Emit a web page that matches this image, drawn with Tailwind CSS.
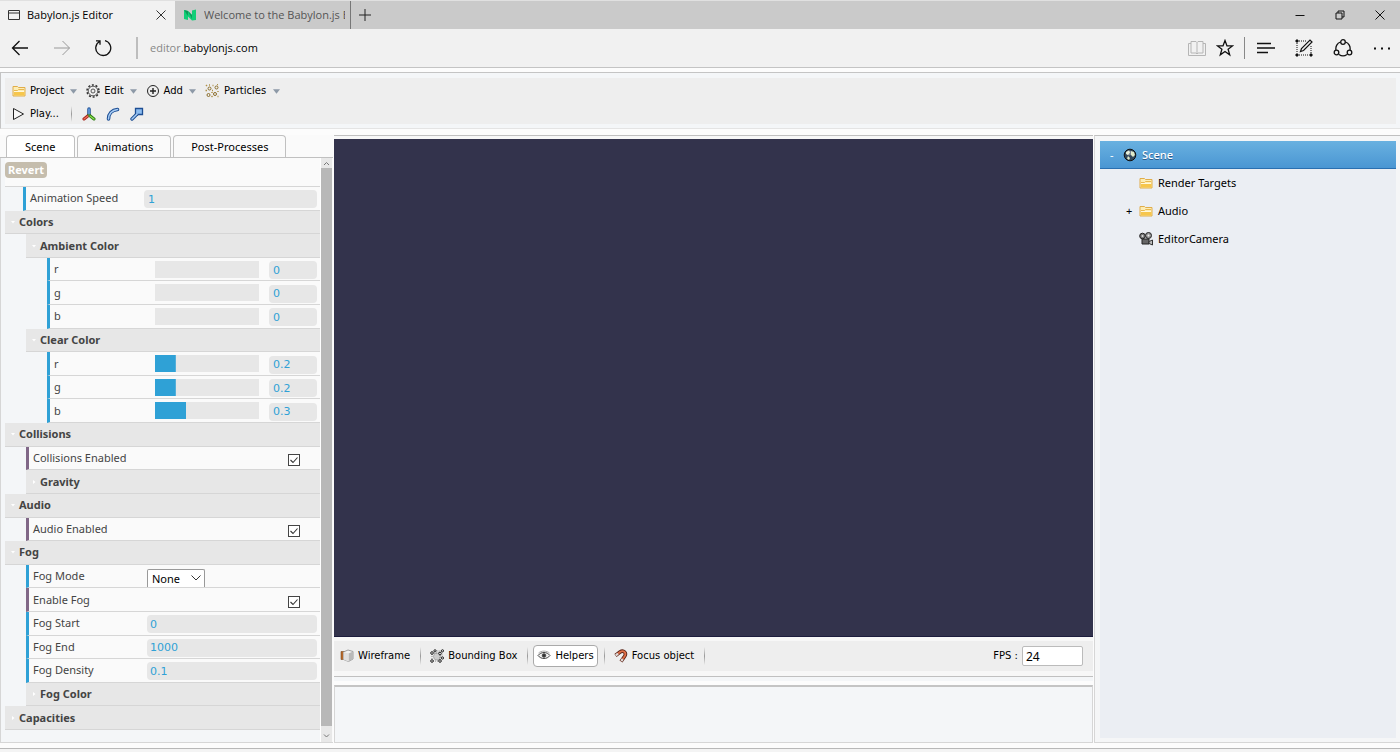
<!DOCTYPE html>
<html lang="en">

<head>
    <meta charset="UTF-8">
    <meta name="viewport" content="width=device-width, initial-scale=1.0">
    <title>Babylon.js Editor</title>
    <script src="https://cdn.jsdelivr.net/npm/@tailwindcss/browser@4"></script>
</head>

<body class="h-screen flex flex-col overflow-hidden bg-[#fcfcfc] font-['Noto_Sans',sans-serif] text-[11px] leading-4 text-black">
    <!-- shared icons -->
    <svg class="hidden">
        <symbol id="folder" viewBox="0 0 14 14">
            <path d="M1 2.500h4.500l1 1H13V12H1z" fill="#fdedb4" stroke="#e0ad4a" />
            <path d="M2 8h10.500v3.500H2z" fill="#f6c64c" />
            <path d="M2 6.500h3.500l1-1H12" fill="none" stroke="#e8b850" />
            <path d="M2 7.500h10" stroke="#fff8dc" />
        </symbol>
        <symbol id="caret" viewBox="0 0 8 5">
            <path d="M0 0h8L4 5z" fill="#8d99a7" />
        </symbol>
        <symbol id="check" viewBox="0 0 12 12">
            <path d="M2.500 6l2.500 2.500 4.500-5" fill="none" stroke="#333" stroke-width="1.100" />
        </symbol>
        <symbol id="open" viewBox="0 0 4 4">
            <path d="M0 1h4L2 3.500z" fill="#fff" />
        </symbol>
        <symbol id="closed" viewBox="0 0 4 4">
            <path d="M1 0v4l2.500-2z" fill="#fff" />
        </symbol>
    </svg>

    <!-- browser tabs -->
    <div class="flex h-[29px] shrink-0 bg-[#cacaca] border-t border-[#e0e0e0] font-['Open_Sans',sans-serif]">
        <div class="flex items-center w-[175px] bg-[#f1f1f1] pl-2 pr-2">
            <svg class="w-3 h-3" viewBox="0 0 12 12" fill="none" stroke="#333"><path d="M.5 1.500h11v9H.5zM.5 4h11" /></svg>
            <span class="ml-[7px] flex-1 whitespace-nowrap">Babylon.js Editor</span>
            <button aria-label="Close tab"><svg class="w-3 h-3" viewBox="0 0 12 12" stroke="#333"><path d="M1.500 1.500l9 9M10.500 1.500l-9 9" /></svg></button>
        </div>
        <div class="flex items-center w-[176px] border-r border-[#777] pl-2 pr-[5px] text-[#555]">
            <svg class="w-3.5 h-3" viewBox="0 0 14 12"><path d="M1 1l4 1 4 4V1.500l4-1V11l-4 .5-4-4V11l-4-1z" fill="#12ce77" /><path d="M5 2l4 8V6zM1 1l4 1v5z" fill="#0b9c58" /></svg>
            <span class="ml-[7px] flex-1 overflow-hidden whitespace-nowrap">Welcome to the Babylon.js Editor</span>
        </div>
        <button aria-label="New tab" class="ml-2"><svg class="w-3 h-3" viewBox="0 0 12 12" stroke="#222"><path d="M6 0v12M0 6h12" /></svg></button>
        <div class="ml-auto flex items-center gap-7 pr-3.5">
            <button aria-label="Minimize"><svg class="w-3 h-3" viewBox="0 0 12 12" stroke="#111"><path d="M1.500 6.500h9" /></svg></button>
            <button aria-label="Restore"><svg class="w-3 h-3" viewBox="0 0 12 12" fill="none" stroke="#111"><path d="M2 4h6v6H2zM4 4V2h6v6H8" /></svg></button>
            <button aria-label="Close"><svg class="w-3 h-3" viewBox="0 0 12 12" stroke="#111"><path d="M1.500 1.500l9 9M10.500 1.500l-9 9" /></svg></button>
        </div>
    </div>

    <!-- address bar -->
    <div class="flex items-center h-[39px] shrink-0 bg-[#f1f1f1] border-b border-[#c4c4c4] pl-[11px] pr-[9px] font-['Open_Sans',sans-serif]">
        <button aria-label="Back"><svg class="w-[18px] h-4" viewBox="0 0 18 16" fill="none" stroke="#111" stroke-width="1.300"><path d="M17 8H1.500M8.500 1L1.500 8l7 7" /></svg></button>
        <button aria-label="Forward" class="ml-6"><svg class="w-[18px] h-4" viewBox="0 0 18 16" fill="none" stroke="#999"><path d="M1 8h15.500M9.500 1l7 7-7 7" /></svg></button>
        <button aria-label="Refresh" class="ml-[23px]"><svg class="w-[18px] h-[18px]" viewBox="0 0 18 18" fill="none" stroke="#111" stroke-width="1.300"><path d="M5.500 2.500a7.500 7.500 0 1 0 5.500-.8M2 1.800h4v4" /></svg></button>
        <div class="ml-6 w-0.5 h-[22px] bg-[#bdbdbd]"></div>
        <div class="ml-3 flex-1 text-[#888]">editor.<span class="text-black">babylonjs.com</span></div>
        <button aria-label="Reading view"><svg class="w-[18px] h-4" viewBox="0 0 18 16" fill="none" stroke="#b5b5b5"><path d="M3 1.500h5l1 1 1-1h5V13h-5l-1 1-1-1H3zM9 2.500V14M3 3.500H.5v12h17v-12H15" /></svg></button>
        <button aria-label="Favorite" class="ml-2.5"><svg class="w-[18px] h-[18px]" viewBox="0 0 18 18" fill="none" stroke="#111" stroke-width="1.300"><path d="M9 1.500l2 5.400h5.500l-4.400 3.400 1.600 5.500L9 12.500l-4.700 3.300 1.600-5.500L1.500 6.900H7z" /></svg></button>
        <div class="ml-2.5 w-px h-[22px] bg-[#888]"></div>
        <button aria-label="Hub" class="ml-3"><svg class="w-[18px] h-4" viewBox="0 0 18 16" fill="none" stroke="#111" stroke-width="1.300"><path d="M0 3.500h14M0 8h18M0 12.500h11" /></svg></button>
        <button aria-label="Web note" class="ml-5"><svg class="w-[18px] h-[18px]" viewBox="0 0 18 18" fill="none" stroke="#111"><path d="M2 4v10M4 2h7M4 16h10M16 7v7" stroke-dasharray="1 1" /><path d="M1 1h2v2H1zM1 15h2v2H1zM15 15h2v2h-2z" fill="#111" /><path d="M5.500 12.500l1-3 8.500-8.500 2 2-8.500 8.500z" stroke-width="1.200" /></svg></button>
        <button aria-label="Share" class="ml-5"><svg class="w-5 h-[18px]" viewBox="0 0 20 18" fill="none" stroke="#111" stroke-width="1.300"><path d="M7.500 3A7 7 0 0 0 3 11M12.500 3A7 7 0 0 1 17 11M6 15.500a7 7 0 0 0 8 0" /><circle cx="10" cy="3" r="2.300" /><circle cx="3.500" cy="13.500" r="2.300" /><circle cx="16.500" cy="13.500" r="2.300" /></svg></button>
        <button aria-label="More" class="ml-5"><svg class="w-[18px] h-4" viewBox="0 0 18 16" fill="#111"><path d="M1 7.500h2v2H1zM8 7.500h2v2H8zM15 7.500h2v2h-2z" /></svg></button>
    </div>

    <!-- editor toolbar -->
    <div class="mt-1 shrink-0 bg-[#f4f6f8] border border-r-0 border-[#c4c4c4] border-b-[#e4e4e4] px-1 pt-[5px] pb-1">
        <div class="pt-px bg-[#eee] font-['DejaVu_Sans',sans-serif] text-[10px]">
            <div class="flex items-center gap-px h-6 pl-[3px]">
                <button class="flex items-center px-1 gap-1">
                    <svg class="w-3.5 h-3.5"><use href="#folder" /></svg>Project<svg class="ml-0.5 w-[7px] h-[5px]"><use href="#caret" /></svg>
                </button>
                <button class="flex items-center px-1 gap-1">
                    <svg class="w-3.5 h-3.5" viewBox="0 0 14 14" fill="none" stroke="#333"><circle cx="7" cy="7" r="6" stroke-width="1.500" stroke-dasharray="2 1.770" /><circle cx="7" cy="7" r="4.800" stroke-width=".8" /><circle cx="7" cy="7" r="2" stroke-width=".8" /></svg>Edit<svg class="ml-0.5 w-[7px] h-[5px]"><use href="#caret" /></svg>
                </button>
                <button class="flex items-center px-1 gap-1">
                    <svg class="w-3.5 h-3.5" viewBox="0 0 14 14" fill="none" stroke="#222"><circle cx="7" cy="7" r="5.500" /><path d="M7 4v6M4 7h6" stroke-width="1.400" /></svg>Add<svg class="ml-0.5 w-[7px] h-[5px]"><use href="#caret" /></svg>
                </button>
                <button class="flex items-center px-1 gap-[5px]">
                    <svg class="w-3.5 h-3.5" viewBox="0 0 14 14" fill="none" stroke="#8a6d2b"><circle cx="4.500" cy="4.500" r="1.500" /><circle cx="11.500" cy="3.500" r="1.500" /><circle cx="3.500" cy="11" r="1.500" /><circle cx="10" cy="10" r="1.500" /><path d="M1 1l1 1M4 1h1M7.500 1.500h1M.5 6.500h1.500M7 6.500h1M13 7v1M6.500 12l1 1M12.500 12.500h1M7 9V8M12 .5h1" stroke="#b0914a" stroke-width="1.500" /></svg>Particles<svg class="ml-0.5 w-[7px] h-[5px]"><use href="#caret" /></svg>
                </button>
            </div>
            <div class="flex items-center h-[21px] pl-[3px]">
                <button class="flex items-center px-1 gap-1">
                    <svg class="w-3.5 h-3.5" viewBox="0 0 14 14" fill="#f8f8f8" stroke="#222"><path d="M1.500 1.500v11L11.500 7z" /></svg>Play...
                </button>
                <div class="ml-2 mr-[5px] w-px h-4 bg-linear-to-b from-transparent via-[#999] to-transparent"></div>
                <button aria-label="Move" class="px-[5px]"><svg class="w-3.5 h-3.5" viewBox="0 0 14 14" stroke-linecap="round"><path d="M7 2v6" stroke="#1d4e94" stroke-width="3.500" /><path d="M7 8l-5 4" stroke="#a3221c" stroke-width="3" /><path d="M7 8l5 4" stroke="#2c7a16" stroke-width="3" /><path d="M7 2v5" stroke="#6da7e8" stroke-width="1.500" /><path d="M6 9l-4 3" stroke="#f07058" stroke-width="1.300" /><path d="M8 9l4 3" stroke="#8be04c" stroke-width="1.300" /></svg></button>
                <button aria-label="Rotate" class="px-[5px]"><svg class="w-3.5 h-3.5" viewBox="0 0 14 14" fill="none" stroke-linecap="round"><path d="M2.500 12C2.500 7 6 3 11.500 2.500" stroke="#1d4e94" stroke-width="3.600" /><path d="M2.500 12C2.500 7 6 3 11.500 2.500" stroke="#a8cdf5" stroke-width="1.600" /></svg></button>
                <button aria-label="Scale" class="px-[5px]"><svg class="w-3.5 h-3.5" viewBox="0 0 14 14" stroke-linecap="round"><path d="M2 12l5-5" stroke="#1d4e94" stroke-width="3.400" /><path d="M5.500 1.500h7v6h-7z" fill="#8dbdf0" stroke="#1d4e94" stroke-width="1.300" /><path d="M2 12l5-5" stroke="#a8cdf5" stroke-width="1.400" /></svg></button>
            </div>
        </div>
    </div>

    <!-- workspace -->
    <div class="mt-1.5 mb-[5px] flex flex-1 min-h-0">

        <!-- left panel -->
        <div class="flex flex-col w-[333px] shrink-0 bg-[#fafafa] border-b border-[#d6d6d6]">
            <div class="flex gap-0.5 pl-1.5 border-b border-[#c0c0c0] shrink-0">
                <button class="h-[22px] -mb-px px-[18px] bg-white border border-b-0 border-[#c0c0c0] rounded-t-sm">Scene</button>
                <button class="h-[22px] px-[17px] border border-b-0 border-[#c0c0c0] rounded-t-sm">Animations</button>
                <button class="h-[22px] px-[17px] border border-b-0 border-[#c0c0c0] rounded-t-sm">Post-Processes</button>
            </div>
            <div class="flex flex-1 min-h-0 border-l border-[#d6d6d6]">
                <div class="flex-1 min-w-0 flex flex-col pl-1 bg-[#f4f6f8] text-[#444]">
                    <div class="h-[29px] shrink-0 pt-1 bg-[#fafafa] border-b border-[#d6d6d6]">
                        <button class="block h-4 px-[3px] rounded-sm bg-[#c5bdad] font-bold text-white leading-4">Revert</button>
                    </div>
                    <div class="flex-1 grid grid-cols-1 auto-rows-fr mb-3">
                        <div class="flex items-center ml-[18px] pl-1 pr-[3px] bg-[#fafafa] border-b border-[#d6d6d6] border-l-3 border-l-[#2fa1d6]">
                            <label for="speed" class="w-[114px]">Animation Speed</label>
                            <input id="speed" value="1" class="mt-0.5 flex-1 min-w-0 h-[18px] px-1 rounded-sm bg-[#e7e7e7] text-[#2fa1d6] font-['DejaVu_Sans',sans-serif]">
                        </div>
                        <div class="flex items-center gap-1 pl-[6px] bg-[#e7e7e7] border-b border-[#d6d6d6] font-bold"><svg class="w-1 h-1"><use href="#open" /></svg>Colors</div>
                        <div class="flex items-center gap-1 ml-[21px] pl-[6px] bg-[#e7e7e7] border-b border-[#d6d6d6] font-bold"><svg class="w-1 h-1"><use href="#open" /></svg>Ambient Color</div>
                        <div class="flex items-center ml-[42px] pl-1 pr-[3px] bg-[#fafafa] border-b border-[#d6d6d6] border-l-3 border-l-[#2fa1d6]">
                            <label for="ar" class="w-[101px]">r</label>
                            <input type="range" aria-label="r" min="0" max="1" step="0.1" value="0" style="background-size: 0% 100%" class="appearance-none w-[104px] h-[17px] bg-[#e7e7e7] bg-[linear-gradient(#2fa1d6,#2fa1d6)] bg-no-repeat [&::-webkit-slider-thumb]:appearance-none">
                            <input id="ar" value="0" class="mt-0.5 ml-2.5 flex-1 min-w-0 h-[18px] px-1 rounded-sm bg-[#e7e7e7] text-[#2fa1d6] font-['DejaVu_Sans',sans-serif]">
                        </div>
                        <div class="flex items-center ml-[42px] pl-1 pr-[3px] bg-[#fafafa] border-b border-[#d6d6d6] border-l-3 border-l-[#2fa1d6]">
                            <label for="ag" class="w-[101px]">g</label>
                            <input type="range" aria-label="g" min="0" max="1" step="0.1" value="0" style="background-size: 0% 100%" class="appearance-none w-[104px] h-[17px] bg-[#e7e7e7] bg-[linear-gradient(#2fa1d6,#2fa1d6)] bg-no-repeat [&::-webkit-slider-thumb]:appearance-none">
                            <input id="ag" value="0" class="mt-0.5 ml-2.5 flex-1 min-w-0 h-[18px] px-1 rounded-sm bg-[#e7e7e7] text-[#2fa1d6] font-['DejaVu_Sans',sans-serif]">
                        </div>
                        <div class="flex items-center ml-[42px] pl-1 pr-[3px] bg-[#fafafa] border-b border-[#d6d6d6] border-l-3 border-l-[#2fa1d6]">
                            <label for="ab" class="w-[101px]">b</label>
                            <input type="range" aria-label="b" min="0" max="1" step="0.1" value="0" style="background-size: 0% 100%" class="appearance-none w-[104px] h-[17px] bg-[#e7e7e7] bg-[linear-gradient(#2fa1d6,#2fa1d6)] bg-no-repeat [&::-webkit-slider-thumb]:appearance-none">
                            <input id="ab" value="0" class="mt-0.5 ml-2.5 flex-1 min-w-0 h-[18px] px-1 rounded-sm bg-[#e7e7e7] text-[#2fa1d6] font-['DejaVu_Sans',sans-serif]">
                        </div>
                        <div class="flex items-center gap-1 ml-[21px] pl-[6px] bg-[#e7e7e7] border-b border-[#d6d6d6] font-bold"><svg class="w-1 h-1"><use href="#open" /></svg>Clear Color</div>
                        <div class="flex items-center ml-[42px] pl-1 pr-[3px] bg-[#fafafa] border-b border-[#d6d6d6] border-l-3 border-l-[#2fa1d6]">
                            <label for="cr" class="w-[101px]">r</label>
                            <input type="range" aria-label="r" min="0" max="1" step="0.1" value="0.2" style="background-size: 20% 100%" class="appearance-none w-[104px] h-[17px] bg-[#e7e7e7] bg-[linear-gradient(#2fa1d6,#2fa1d6)] bg-no-repeat [&::-webkit-slider-thumb]:appearance-none">
                            <input id="cr" value="0.2" class="mt-0.5 ml-2.5 flex-1 min-w-0 h-[18px] px-1 rounded-sm bg-[#e7e7e7] text-[#2fa1d6] font-['DejaVu_Sans',sans-serif]">
                        </div>
                        <div class="flex items-center ml-[42px] pl-1 pr-[3px] bg-[#fafafa] border-b border-[#d6d6d6] border-l-3 border-l-[#2fa1d6]">
                            <label for="cg" class="w-[101px]">g</label>
                            <input type="range" aria-label="g" min="0" max="1" step="0.1" value="0.2" style="background-size: 20% 100%" class="appearance-none w-[104px] h-[17px] bg-[#e7e7e7] bg-[linear-gradient(#2fa1d6,#2fa1d6)] bg-no-repeat [&::-webkit-slider-thumb]:appearance-none">
                            <input id="cg" value="0.2" class="mt-0.5 ml-2.5 flex-1 min-w-0 h-[18px] px-1 rounded-sm bg-[#e7e7e7] text-[#2fa1d6] font-['DejaVu_Sans',sans-serif]">
                        </div>
                        <div class="flex items-center ml-[42px] pl-1 pr-[3px] bg-[#fafafa] border-b border-[#d6d6d6] border-l-3 border-l-[#2fa1d6]">
                            <label for="cb" class="w-[101px]">b</label>
                            <input type="range" aria-label="b" min="0" max="1" step="0.1" value="0.3" style="background-size: 30% 100%" class="appearance-none w-[104px] h-[17px] bg-[#e7e7e7] bg-[linear-gradient(#2fa1d6,#2fa1d6)] bg-no-repeat [&::-webkit-slider-thumb]:appearance-none">
                            <input id="cb" value="0.3" class="mt-0.5 ml-2.5 flex-1 min-w-0 h-[18px] px-1 rounded-sm bg-[#e7e7e7] text-[#2fa1d6] font-['DejaVu_Sans',sans-serif]">
                        </div>
                        <div class="flex items-center gap-1 pl-[6px] bg-[#e7e7e7] border-b border-[#d6d6d6] font-bold"><svg class="w-1 h-1"><use href="#open" /></svg>Collisions</div>
                        <div class="flex items-center justify-between ml-[21px] pl-1 pr-5 bg-[#fafafa] border-b border-[#d6d6d6] border-l-3 border-l-[#806787]">
                            <label for="collisions">Collisions Enabled</label>
                            <span class="grid mt-1"><input id="collisions" type="checkbox" checked class="appearance-none col-start-1 row-start-1 w-3 h-3 border border-[#444] bg-white"><svg class="col-start-1 row-start-1 w-3 h-3 pointer-events-none"><use href="#check" /></svg></span>
                        </div>
                        <div class="flex items-center gap-1 ml-[21px] pl-[6px] bg-[#e7e7e7] border-b border-[#d6d6d6] font-bold"><svg class="w-1 h-1"><use href="#closed" /></svg>Gravity</div>
                        <div class="flex items-center gap-1 pl-[6px] bg-[#e7e7e7] border-b border-[#d6d6d6] font-bold"><svg class="w-1 h-1"><use href="#open" /></svg>Audio</div>
                        <div class="flex items-center justify-between ml-[21px] pl-1 pr-5 bg-[#fafafa] border-b border-[#d6d6d6] border-l-3 border-l-[#806787]">
                            <label for="audio">Audio Enabled</label>
                            <span class="grid mt-1"><input id="audio" type="checkbox" checked class="appearance-none col-start-1 row-start-1 w-3 h-3 border border-[#444] bg-white"><svg class="col-start-1 row-start-1 w-3 h-3 pointer-events-none"><use href="#check" /></svg></span>
                        </div>
                        <div class="flex items-center gap-1 pl-[6px] bg-[#e7e7e7] border-b border-[#d6d6d6] font-bold"><svg class="w-1 h-1"><use href="#open" /></svg>Fog</div>
                        <div class="flex items-center ml-[21px] pl-1 bg-[#fafafa] border-b border-[#d6d6d6] border-l-3 border-l-[#2fa1d6]">
                            <label for="fogmode" class="w-[114px]">Fog Mode</label>
                            <span class="grid items-center self-end">
                                <select id="fogmode" class="appearance-none col-start-1 row-start-1 w-[58px] h-[18px] pl-1 border border-b-0 border-[#999] rounded-t-xs bg-white text-black">
                                    <option>None</option>
                                    <option>Linear</option>
                                    <option>Exp</option>
                                </select>
                                <svg class="col-start-1 row-start-1 justify-self-end mr-1 w-2.5 h-1.5 pointer-events-none" viewBox="0 0 10 6" fill="none" stroke="#333"><path d="M.5.5L5 5 9.500.5" /></svg>
                            </span>
                        </div>
                        <div class="flex items-center justify-between ml-[21px] pl-1 pr-5 bg-[#fafafa] border-b border-[#d6d6d6] border-l-3 border-l-[#806787]">
                            <label for="fog">Enable Fog</label>
                            <span class="grid mt-1"><input id="fog" type="checkbox" checked class="appearance-none col-start-1 row-start-1 w-3 h-3 border border-[#444] bg-white"><svg class="col-start-1 row-start-1 w-3 h-3 pointer-events-none"><use href="#check" /></svg></span>
                        </div>
                        <div class="flex items-center ml-[21px] pl-1 pr-[3px] bg-[#fafafa] border-b border-[#d6d6d6] border-l-3 border-l-[#2fa1d6]">
                            <label for="fogstart" class="w-[114px]">Fog Start</label>
                            <input id="fogstart" value="0" class="mt-0.5 flex-1 min-w-0 h-[18px] px-[3px] rounded-sm bg-[#e7e7e7] text-[#2fa1d6] font-['DejaVu_Sans',sans-serif]">
                        </div>
                        <div class="flex items-center ml-[21px] pl-1 pr-[3px] bg-[#fafafa] border-b border-[#d6d6d6] border-l-3 border-l-[#2fa1d6]">
                            <label for="fogend" class="w-[114px]">Fog End</label>
                            <input id="fogend" value="1000" class="mt-0.5 flex-1 min-w-0 h-[18px] px-[3px] rounded-sm bg-[#e7e7e7] text-[#2fa1d6] font-['DejaVu_Sans',sans-serif]">
                        </div>
                        <div class="flex items-center ml-[21px] pl-1 pr-[3px] bg-[#fafafa] border-b border-[#d6d6d6] border-l-3 border-l-[#2fa1d6]">
                            <label for="fogdensity" class="w-[114px]">Fog Density</label>
                            <input id="fogdensity" value="0.1" class="mt-0.5 flex-1 min-w-0 h-[18px] px-[3px] rounded-sm bg-[#e7e7e7] text-[#2fa1d6] font-['DejaVu_Sans',sans-serif]">
                        </div>
                        <div class="flex items-center gap-1 ml-[21px] pl-[6px] bg-[#e7e7e7] border-b border-[#d6d6d6] font-bold"><svg class="w-1 h-1"><use href="#closed" /></svg>Fog Color</div>
                        <div class="flex items-center gap-1 pl-[6px] bg-[#e7e7e7] border-b border-[#d6d6d6] font-bold"><svg class="w-1 h-1"><use href="#closed" /></svg>Capacities</div>
                    </div>
                </div>
                <!-- scrollbar -->
                <div class="flex flex-col w-3 mr-px shrink-0 bg-[#e8e8e8] border-l border-white">
                    <svg class="w-full h-2.5 shrink-0" viewBox="0 0 11 10" fill="none" stroke="#777"><path d="M3 7l2.500-2.500L8 7" /></svg>
                    <div class="flex-1 bg-[#b8b8b8]"></div>
                    <svg class="w-full h-4 shrink-0" viewBox="0 0 11 16" fill="none" stroke="#777"><path d="M3 8.500L5.500 11 8 8.500" /></svg>
                </div>
            </div>
        </div>

        <!-- viewport -->
        <div class="ml-px flex-1 flex flex-col min-w-0">
            <div class="flex-1 flex flex-col min-h-0 border-t border-b border-[#c0c0c0] bg-[#f7f7f7]">
                <canvas class="mt-[3px] flex-1 min-h-0 w-full bg-[#33334c] border-b border-[#1c1c3c]"></canvas>
                <div class="mt-1 mb-[5px] flex items-center h-[30px] shrink-0 pl-0.5 pr-2.5 bg-[#eee] font-['DejaVu_Sans',sans-serif] text-[10px]">
                    <button class="flex items-center gap-1 px-1">
                        <svg class="w-3.5 h-3.5" viewBox="0 0 14 14"><path d="M1 2.500h3.500v8H1z" fill="#b5692c" stroke="#7a4a22" stroke-width=".6" /><path d="M3.500 3L8 1l5 1.500v7.500L8.500 12.500l-5-2z" fill="#f2f2f2" stroke="#8a8a8a" stroke-width=".8" /><path d="M8.500 4.500l4.500-2v7.500l-4.500 2.500z" fill="#b9b9b9" /><path d="M3.500 3l5 1.500v8l-5-2z" fill="#e0e0e0" /></svg>Wireframe
                    </button>
                    <div class="ml-1.5 mr-[5px] w-px h-[18px] bg-linear-to-b from-transparent via-[#999] to-transparent"></div>
                    <button class="flex items-center gap-1 px-1">
                        <svg class="w-3.5 h-3.5" viewBox="0 0 14 14" fill="#eee" stroke="#222"><circle cx="7" cy="7.500" r="3.500" fill="#ccc" stroke="#aaa" /><path d="M2 4h8v8H2zM2 4l3-2h7v7l-2 3M10 4l2-2" fill="none" stroke="#888" stroke-dasharray="1 1" /><circle cx="2" cy="4" r="1.300" /><circle cx="10" cy="4.500" r="1.300" /><circle cx="2" cy="12" r="1.300" /><circle cx="10" cy="12" r="1.300" /><circle cx="5" cy="1.800" r="1.100" /><circle cx="12.500" cy="1.800" r="1.100" /><circle cx="12.500" cy="9" r="1.100" /></svg>Bounding Box
                    </button>
                    <div class="ml-1.5 mr-[5px] w-px h-[18px] bg-linear-to-b from-transparent via-[#999] to-transparent"></div>
                    <button class="flex items-center gap-1 px-[3px] h-[22px] bg-white border border-[#aaa] rounded-sm">
                        <svg class="w-3.5 h-3.5" viewBox="0 0 14 14" fill="none" stroke="#444"><path d="M1 6.500c3-4 9-4 12 0-3 4-9 4-12 0z" fill="#eee" /><circle cx="7" cy="6.500" r="1.700" fill="#333" /><path d="M1.500 4c3-2.500 8-2.500 11 0" stroke="#aaa" /></svg>Helpers
                    </button>
                    <div class="ml-1.5 mr-[5px] w-px h-[18px] bg-linear-to-b from-transparent via-[#999] to-transparent"></div>
                    <button class="flex items-center gap-1 px-1">
                        <svg class="w-3.5 h-3.5" viewBox="0 0 14 14" fill="none"><path d="M1.500 6.500L6 3C9.500.5 13 4 10.500 7.500L7 12.500" stroke="#5a2418" stroke-width="3.600" /><path d="M2 6.200L6 3C9.500.5 13 4 10.500 7.500L7.300 12" stroke="#e07048" stroke-width="1.800" /><path d="M1.800 6.300L4 4.600M7.300 12l1.400-2" stroke="#ddd" stroke-width="2.200" /></svg>Focus object
                    </button>
                    <div class="ml-1.5 mr-[5px] w-px h-[18px] bg-linear-to-b from-transparent via-[#999] to-transparent"></div>
                    <label for="fps" class="ml-auto mr-1">FPS :</label>
                    <input id="fps" value="24" class="w-[61px] h-5 px-[3px] border border-[#bbb] rounded-xs bg-white font-['Noto_Sans',sans-serif] text-xs">
                </div>
            </div>
            <div class="h-1 shrink-0 bg-[#f4f6f8]"></div>
            <div class="mt-1 h-[58px] shrink-0 bg-[#f4f6f8] border border-[#d6d6d6] border-t-2 border-t-[#c4c4c4]"></div>
        </div>

        <!-- scene graph -->
        <div class="ml-px w-[306px] shrink-0 bg-[#f5f6f7] border border-[#d6d6d6] border-t-[#c0c0c0] border-r-0 pl-[5px] pr-1 pt-[5px] pb-1">
            <div class="h-full bg-[#ebeef3]">
                <div class="flex items-center h-7 pl-2.5 bg-linear-to-b from-[#69b1e0] to-[#4a96d3] border-b border-[#2a6fb0] text-white">
                    <span class="w-[13px]">-</span>
                    <svg class="w-3.5 h-3.5" viewBox="0 0 14 14"><circle cx="7" cy="7" r="5.800" fill="#32465a" stroke="#111" /><path d="M3 4l3-1.500 1 2-2 2.500-2-1zM8 3l3 1 1 3-2 2-2-2zM5 8l2 2-1 2-2-1.500z" fill="#dfe8c8" /><circle cx="6" cy="5" r="2.500" fill="#fff" opacity=".35" /></svg>
                    <span class="ml-[5px] font-medium text-shadow-2xs text-shadow-[#2a5a8a]">Scene</span>
                </div>
                <div class="flex items-center h-7 pl-[26px]">
                    <span class="w-[13px]"></span>
                    <svg class="w-3.5 h-3.5"><use href="#folder" /></svg>
                    <span class="ml-[5px]">Render Targets</span>
                </div>
                <div class="flex items-center h-7 pl-[26px]">
                    <span class="w-[13px]">+</span>
                    <svg class="w-3.5 h-3.5"><use href="#folder" /></svg>
                    <span class="ml-[5px]">Audio</span>
                </div>
                <div class="flex items-center h-7 pl-[26px]">
                    <span class="w-[13px]"></span>
                    <svg class="w-3.5 h-3.5" viewBox="0 0 14 14"><circle cx="3.500" cy="4" r="2.800" fill="#777" stroke="#222" /><circle cx="9.500" cy="3.500" r="3" fill="#999" stroke="#222" /><circle cx="3.500" cy="4" r="1" fill="#ddd" /><circle cx="9.500" cy="3.500" r="1" fill="#eee" /><path d="M3 7h7v5H3z" fill="#666" stroke="#222" /><path d="M10 9.500l3.500-1.500v5L10 11.500z" fill="#bbb" stroke="#333" /></svg>
                    <span class="ml-[5px]">EditorCamera</span>
                </div>
            </div>
        </div>
    </div>

    <div class="h-1 shrink-0 border-t border-[#b8b8b8] bg-[#f4f4f4]"></div>
</body>

</html>
